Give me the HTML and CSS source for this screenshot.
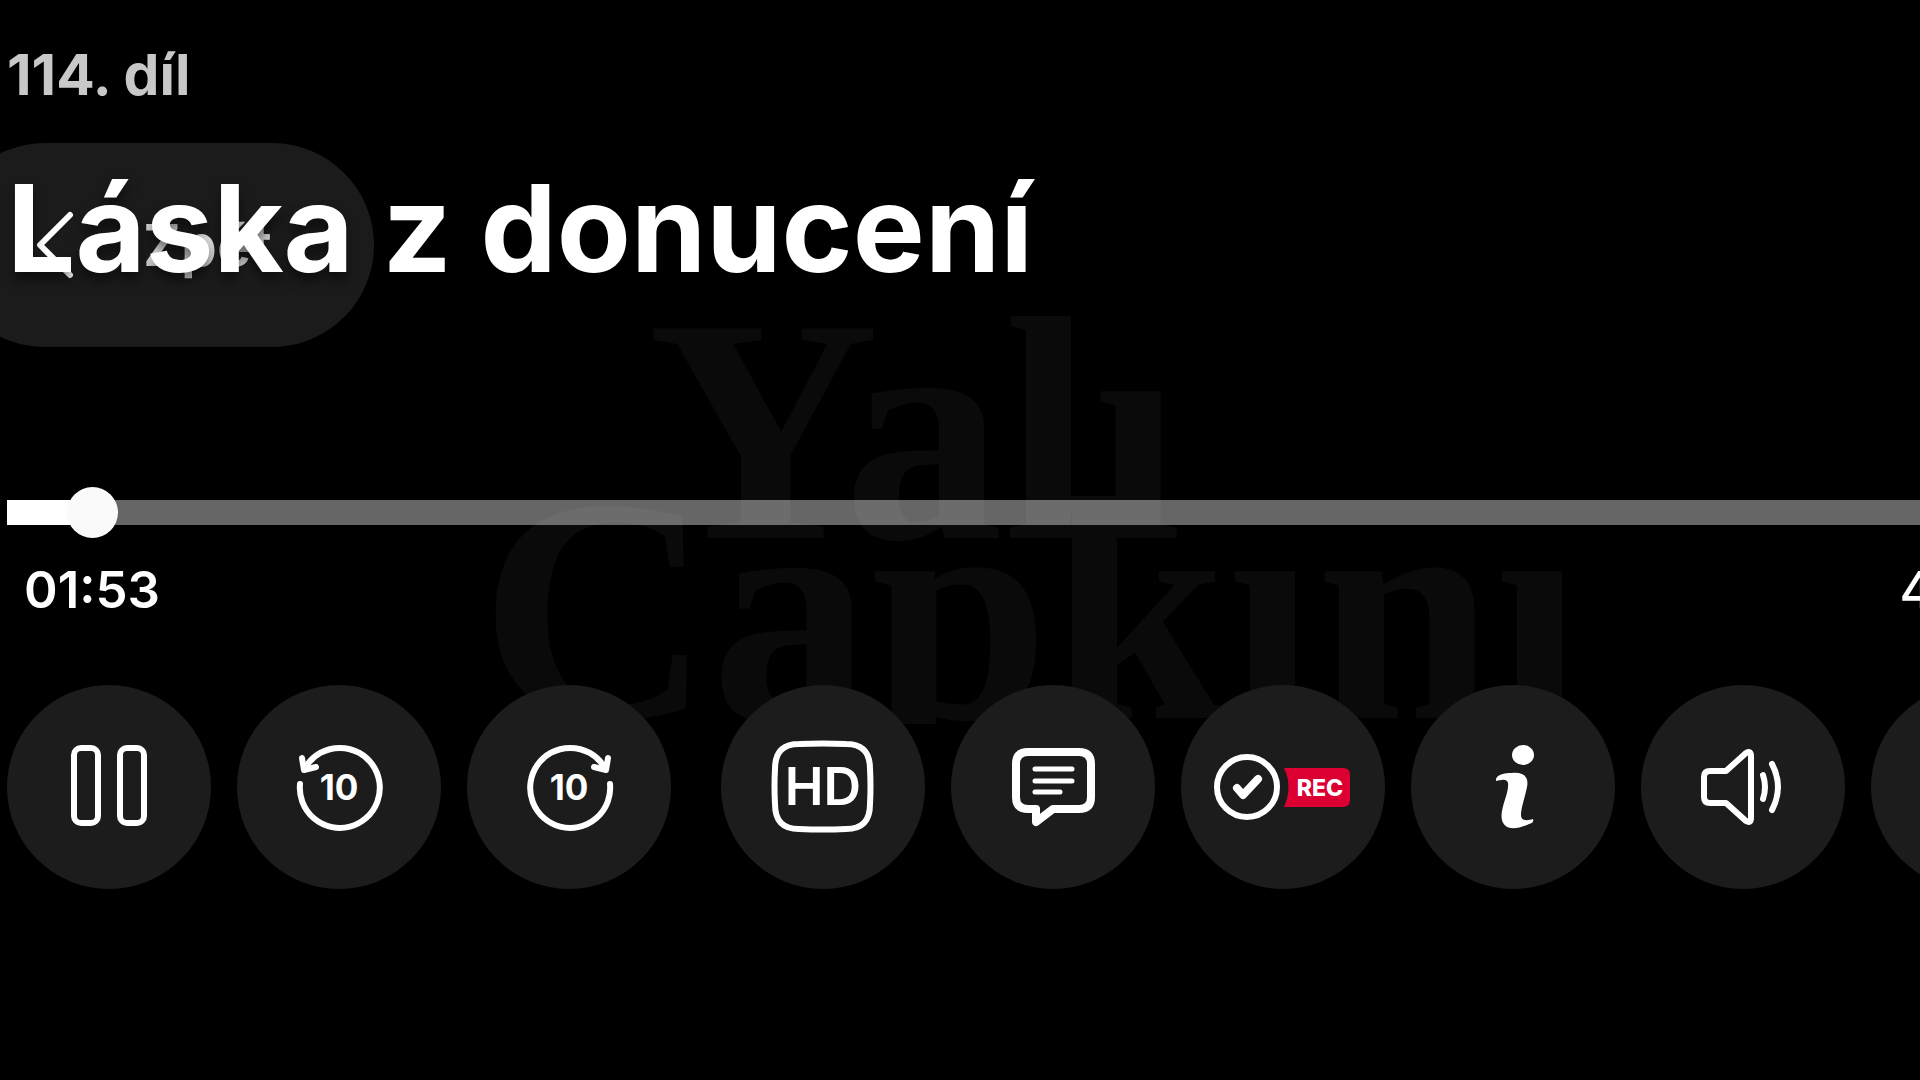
FILE: index.html
```html
<!DOCTYPE html>
<html lang="cs">
<head>
<meta charset="utf-8">
<meta name="viewport" content="width=device-width, initial-scale=1">
<title>Láska z donucení – 114. díl</title>
<link rel="stylesheet" href="styles.css">
</head>
<body>
<div class="backdrop" aria-hidden="true">
  <span class="backdrop-top">Yalı</span>
  <span class="backdrop-bottom">Çapkını</span>
</div>
<main class="player">
  <p class="episode">114. díl</p>
  <header class="header">
    <button class="back" type="button">
      <svg class="back-icon" viewBox="0 0 40 68" aria-hidden="true"><path d="M35 4 5 34l30 30"/></svg>
      <span>Zpět</span>
    </button>
    <h1 class="title">Láska z donucení</h1>
  </header>
  <input class="seek" type="range" min="0" max="100" step="any" value="3.16" aria-label="Pozice přehrávání">
  <div class="times">
    <span>01:53</span>
    <span class="total">4</span>
  </div>
  <div class="controls">
    <div class="group">
      <button class="control" type="button" aria-label="Pozastavit">
        <svg viewBox="0 0 204 204"><g class="line"><rect x="67" y="63" width="24" height="75" rx="7"/><rect x="113" y="63" width="24" height="75" rx="7"/></g></svg>
      </button>
      <button class="control" type="button" aria-label="Zpět o 10 sekund">
        <svg viewBox="0 0 204 204"><g class="line"><path d="M63 99A40 40 0 1 0 70 80"/><path d="M65 73l2 12 12-3"/></g><text class="seconds" x="102" y="115">10</text></svg>
      </button>
      <button class="control" type="button" aria-label="Vpřed o 10 sekund">
        <svg viewBox="0 0 204 204"><g class="line"><path d="M143 99A40 40 0 1 1 136 80"/><path d="M141 73l-2 12-12-3"/></g><text class="seconds" x="102" y="115">10</text></svg>
      </button>
    </div>
    <div class="group">
      <button class="control" type="button" aria-label="Kvalita HD">
        <svg viewBox="0 0 204 204"><path class="line" d="M54 84C54 67 62 59 78 59Q102 58 125 59C141 59 149 67 149 84Q150 101 149 119C149 136 141 144 125 144Q102 145 78 144C62 144 54 136 54 119Q53 101 54 84Z"/><text class="quality" x="102" y="120">HD</text></svg>
      </button>
      <button class="control" type="button" aria-label="Titulky">
        <svg viewBox="0 0 204 204"><path class="line heavy" d="M77 67H128Q140 67 140 79V112Q140 124 128 124H102L85 137V124H77Q65 124 65 112V79Q65 67 77 67Z"/><path class="line light" d="M84 84h37M84 96h37M84 107h25"/></svg>
      </button>
      <button class="control" type="button" aria-label="Nahráno">
        <svg viewBox="0 0 204 204"><circle class="line" cx="66" cy="102" r="30"/><path class="line check" d="M56 103l6 7 15-16"/><path class="badge" d="M103 83H162Q169 83 169 90V115Q169 122 162 122H103Q112 102 103 83Z"/><text class="rec" x="139" y="111">REC</text></svg>
      </button>
      <button class="control" type="button" aria-label="Informace">
        <svg viewBox="0 0 204 204"><g class="solid"><ellipse cx="112" cy="70" rx="11" ry="10"/><path d="M85 96C84 90 93 88 101 88C113 87 118 92 116 102C114 112 110 123 110 130C110 136 116 136 122 134C123 137 121 138 118 139C99 148 88 142 91 126C93 115 98 106 97 98C96 93 90 95 85 96Z"/></g></svg>
      </button>
      <button class="control" type="button" aria-label="Hlasitost">
        <svg viewBox="0 0 204 204"><path class="line" d="M69 86H85L105 68Q110 65 110 71V133Q110 139 105 136L85 118H69Q63 118 63 112V92Q63 86 69 86ZM122 90Q126 102 122 114M131 79Q143 102 131 125"/></svg>
      </button>
      <button class="control" type="button" aria-label="Celá obrazovka"></button>
    </div>
  </div>
</main>
</body>
</html>
```
FILE: styles.css
```css
* { box-sizing: border-box; }

body {
  margin: 0;
  min-height: 100vh;
  background: #000;
  color: #fff;
  font-family: Inter, "Liberation Sans", sans-serif;
  position: relative;
  overflow: hidden;
}

/* faint programme logo behind the controls */
.backdrop {
  position: absolute;
  top: 340px;
  left: 480px;
  display: flex;
  flex-direction: column;
  font: bold 320px/180px "Liberation Serif", serif;
  color: #0a0a0a;
  clip-path: inset(-60px 0 -24px 0);
}
.backdrop-top { padding-left: 168px; }

.player {
  position: relative;
  padding: 39px 0 40px 7px;
  margin-right: -30px;
}

.episode {
  margin: 0;
  font-size: 57px;
  line-height: 72px;
  font-weight: 700;
  color: #c8c8c8;
}

.header {
  display: grid;
  margin-top: 32px;
}
.header > * { grid-area: 1 / 1; }

.back {
  justify-self: start;
  display: flex;
  align-items: center;
  gap: 68px;
  height: 204px;
  margin-left: -64px;
  padding: 0 102px 0 92px;
  border: 0;
  border-radius: 102px;
  background: #1b1b1b;
  color: #d8d8d8;
  font: 600 58px/72px Inter, sans-serif;
}
.back-icon {
  width: 40px;
  height: 68px;
  fill: none;
  stroke: #fff;
  stroke-width: 6;
  stroke-linecap: round;
  stroke-linejoin: round;
}

.title {
  margin: 0;
  font-size: 121px;
  line-height: 170px;
  font-weight: 700;
  text-shadow: 0 8px 12px rgba(0, 0, 0, .5);
  pointer-events: none;
  white-space: nowrap;
}

.seek {
  appearance: none;
  display: block;
  width: 100%;
  height: 51px;
  margin: 140px 0 0;
  background: linear-gradient(to right, #fff 85px, rgba(255, 255, 255, .4) 85px) center / 100% 25px no-repeat;
}
.seek::-webkit-slider-thumb {
  appearance: none;
  width: 51px;
  height: 51px;
  border-radius: 50%;
  background: #fafafa;
}

.times {
  display: flex;
  justify-content: space-between;
  margin-top: 22px;
  padding: 0 17px;
  font-size: 51px;
  line-height: 60px;
  font-weight: 600;
}
.total { font-weight: 500; }

.controls {
  display: flex;
  gap: 50px;
  margin-top: 65px;
}
.group {
  display: flex;
  gap: 26px;
}
.control {
  flex: none;
  width: 204px;
  height: 204px;
  padding: 0;
  border: 0;
  border-radius: 50%;
  background: #1c1c1c;
}
.control svg {
  display: block;
  width: 100%;
  height: 100%;
}

.line {
  fill: none;
  stroke: #fff;
  stroke-width: 6;
  stroke-linecap: round;
  stroke-linejoin: round;
}
.heavy { stroke-width: 8; }
.light { stroke-width: 5; }
.check { stroke-width: 8; }
.solid { fill: #fff; }
.badge { fill: #dc0032; }

.seconds, .quality, .rec {
  fill: #fff;
  font-family: Inter, sans-serif;
  text-anchor: middle;
}
.seconds { font-size: 35px; font-weight: 700; }
.quality { font-size: 52px; font-weight: 600; }
.rec { font-size: 23px; font-weight: 800; }
```
